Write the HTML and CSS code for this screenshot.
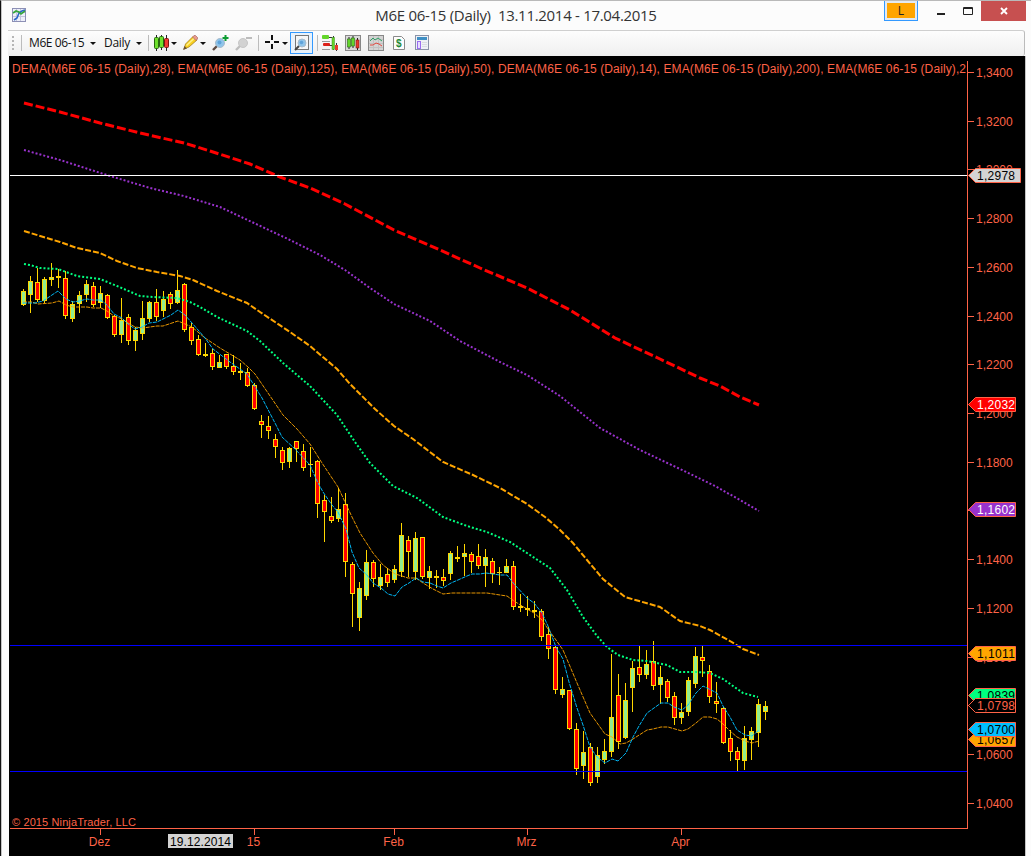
FILE: index.html
```html
<!DOCTYPE html>
<html lang="de">
<head>
    <meta charset="UTF-8">
    <title>M6E 06-15 (Daily)</title>
    <link rel="stylesheet" href="styles.css">
</head>
<body>
<div class="window">
    <div class="titlebar">
        <svg class="app-icon" width="14" height="14" viewBox="0 0 14 14">
            <rect x=".5" y=".5" width="13" height="13" fill="#eef0fa" stroke="#8d90b5"/>
            <path d="M4.5 1v12M8.5 1v12M1 4.5h12M1 8.5h12" stroke="#c3c5dc"/>
            <path d="M2 12l3-2 2-5 3-2 3-1" fill="none" stroke="#2a66c8" stroke-width="1.6"/>
            <path d="M1 5l3-2 3 1 2 2 4-3" fill="none" stroke="#35a839" stroke-width="1.6"/>
        </svg>
        <div class="title">M6E 06-15 (Daily)&nbsp; 13.11.2014 - 17.04.2015</div>
        <div class="controls">
            <button class="link-button"><span>L</span></button>
            <svg class="min" width="8" height="19"><rect y="12" width="8" height="2" fill="#222"/></svg>
            <svg class="max" width="10" height="19"><path d="M.5 6.500h9v7h-9zM0 7.500h10" fill="none" stroke="#222"/></svg>
            <button class="close">
                <svg width="8" height="8"><path d="M1 1l6 6M7 1L1 7" stroke="#fff" stroke-width="1.9"/></svg>
            </button>
        </div>
    </div>

    <div class="toolbar">
        <svg class="grip" width="3" height="16"><path d="M1 1v15" stroke="#b5b5b5" stroke-width="2" stroke-dasharray="2 2"/></svg>
        <i class="sep"></i>
        <span class="instrument">M6E 06-15</span>
        <i class="arrow"></i>
        <span class="interval">Daily</span>
        <i class="arrow"></i>
        <i class="sep sep-style"></i>
        <!-- chart style -->
        <svg class="style-icon" width="15" height="16">
            <path d="M2.500 0v16M7.500 0v15M12.500 0v16" stroke="#222"/>
            <rect x=".5" y="2.500" width="4" height="11" rx="1" fill="#6ee02c" stroke="#27680f"/>
            <rect x="5.500" y="1.500" width="4" height="11" rx="1" fill="#6ee02c" stroke="#27680f"/>
            <rect x="10.500" y="3.500" width="4" height="9" rx="1" fill="#ef3b32" stroke="#7d1511"/>
        </svg>
        <i class="arrow near"></i>
        <!-- drawing tools -->
        <svg class="pencil" width="15" height="15">
            <path d="M1 14l1.500-5L10 1.500 14 5 6 12z" fill="#f8cf21" stroke="#9a7410" stroke-width=".7"/>
            <path d="M3.500 10.500l8-7.500" stroke="#fff18a" stroke-width="1.500"/>
            <path d="M9.500 2l1.500-1.500h1.500l2 2v1.500L13 5.500z" fill="#e79a90" stroke="#a05c50" stroke-width=".6"/>
            <path d="M0 15l1.500-4 2.500 2.500z" fill="#6b5330"/>
        </svg>
        <i class="arrow near"></i>
        <svg class="zoom-in" width="17" height="16">
            <path d="M1 15l5-5" stroke="#5c4a42" stroke-width="2.400"/>
            <circle cx="8" cy="8" r="4.500" fill="#8fc4ea" stroke="#a9bccb"/>
            <circle cx="7.500" cy="7.500" r="2" fill="#5fa3da"/>
            <path d="M13.500 0v6M10.500 3h6" stroke="#0d9c32" stroke-width="2"/>
        </svg>
        <svg class="zoom-out" width="17" height="16">
            <path d="M1 15l5-5" stroke="#bdbdbd" stroke-width="2.400"/>
            <circle cx="8" cy="8" r="4.500" fill="#d2d2d2" stroke="#c6c6c6"/>
            <path d="M11 3h6" stroke="#bcbcbc" stroke-width="2"/>
        </svg>
        <i class="sep"></i>
        <svg class="cross" width="15" height="15">
            <path d="M7 0v5M7 9v5M0 7h5M9 7h5" stroke="#111" stroke-width="2"/>
        </svg>
        <i class="arrow near"></i>
        <span class="active-tool">
            <svg width="16" height="16">
                <rect x="1.500" y=".5" width="13" height="14" fill="#f6f6f6" stroke="#777"/>
                <path d="M1 15l5-5" stroke="#444" stroke-width="2"/>
                <circle cx="8" cy="8" r="4" fill="#8fc4ea" stroke="#a9bccb"/>
                <circle cx="7.500" cy="7.500" r="1.800" fill="#5fa3da"/>
            </svg>
        </span>
        <i class="sep sep-trader"></i>
        <!-- chart trader -->
        <svg class="tool" width="16" height="16">
            <path d="M6 2.500h4M6 10.500h4M11.500 1v14M14.500 8v8" stroke="#333"/>
            <rect x="0" y="0" width="7" height="4" rx="1" fill="#63d52a"/>
            <rect x="1" y="8" width="7" height="3" rx="1" fill="#dc2119"/>
            <path d="M0 6.500h8M0 14.500h8" stroke="#999"/>
            <rect x="10" y="2.500" width="2.500" height="12" fill="#63d52a" stroke="#3f8d22" stroke-width=".5"/>
            <rect x="13" y="10" width="3" height="5" fill="#e8392e"/>
        </svg>
        <svg class="tool" width="16" height="16">
            <rect x=".5" y=".5" width="15" height="15" fill="#d9d9d9" stroke="#888"/>
            <path d="M4 2v12M8 1v12M12.500 3v12" stroke="#222"/>
            <rect x="2.500" y="4" width="3" height="8" fill="#63d52a" stroke="#2b6b12" stroke-width=".6"/>
            <rect x="6.500" y="3" width="3" height="8" fill="#63d52a" stroke="#2b6b12" stroke-width=".6"/>
            <rect x="11" y="5" width="3" height="8" fill="#e8392e" stroke="#7d1511" stroke-width=".6"/>
        </svg>
        <svg class="tool" width="16" height="16">
            <rect x=".5" y=".5" width="15" height="15" fill="#d3d3d3" stroke="#888"/>
            <path d="M1 4.500h14M1 8.500h14M1 12.500h14M5.500 1v14M10.500 1v14" stroke="#c1c1c1"/>
            <path d="M2 6l3-3 2 2 3-2 4 3" fill="none" stroke="#2fa065"/>
            <path d="M2 10l3 0 3-2 3 1 3 2" fill="none" stroke="#e2483f"/>
        </svg>
        <svg class="page" width="12" height="14">
            <path d="M.5.500h8l3 3v10h-11z" fill="#fdfdfd" stroke="#8a8a8a"/>
            <text x="3" y="11" class="dollar">$</text>
        </svg>
        <svg class="props" width="14" height="16">
            <rect x=".5" y=".5" width="13" height="14" fill="#eef1f6" stroke="#8b93a8"/>
            <rect x="2" y="2" width="10" height="3" fill="#3f8fc4"/>
            <rect x="2.500" y="6.500" width="3" height="7" fill="#e7dcff" stroke="#9b6df0"/>
            <path d="M7 7.500h5M7 9.500h5M7 11.500h5" stroke="#d9dce2"/>
        </svg>
    </div>

    <svg id="chart" width="1016" height="800" viewBox="9 56 1016 800">
        <text x="12" y="73" textLength="954" class="label">DEMA(M6E 06-15 (Daily),28), EMA(M6E 06-15 (Daily),125), EMA(M6E 06-15 (Daily),50), DEMA(M6E 06-15 (Daily),14), EMA(M6E 06-15 (Daily),200), EMA(M6E 06-15 (Daily),2</text>
        <text x="12" y="826" textLength="124" class="label copyright">© 2015 NinjaTrader, LLC</text>
        <g id="candles"></g>
        <g id="averages"></g>
        <g class="crisp">
            <rect x="10" y="175" width="957" height="1" fill="#fff"/>
            <rect x="10" y="645" width="957" height="1" class="level"/>
            <rect x="10" y="771" width="957" height="1" class="level"/>
            <rect x="967" y="61" width="1" height="768" class="axis"/>
            <rect x="10" y="828" width="958" height="1" class="axis"/>
        </g>
        <g id="prices"></g>
        <g id="dates"></g>
        <g id="tags"></g>
    </svg>
</div>
<script src="chart.js"></script>
</body>
</html>
```
FILE: styles.css
```css
body {
    margin: 0;
    background: #fcfcfc;
    overflow: hidden;
}
.window {
    box-sizing: border-box;
    width: 1031px;
    height: 856px;
    border-top: 1px solid #b9b9b9;
    border-left: 1px solid #111;
    box-shadow: inset 1px 0 #c4c4c4;
}
.titlebar {
    display: grid;
    grid-template-columns: 1fr auto 1fr;
    height: 29px;
}
.app-icon {
    margin: 7px 0 0 11px;
}
.title {
    font: 15px/29px "Open Sans", "Noto Sans", sans-serif;
    letter-spacing: -0.3px;
    color: #333;
    white-space: pre;
}
.controls {
    display: flex;
    justify-content: flex-end;
    align-items: flex-start;
    padding-right: 5px;
}
button {
    border: none;
    padding: 0;
}
.link-button {
    box-sizing: border-box;
    width: 34px;
    height: 20px;
    padding: 2px;
    border: 1px solid #3399ff;
    border-top: none;
    background: #e3eaf2;
}
.link-button span {
    display: block;
    height: 15px;
    background: #ffa500;
    font: 12px/15px "Open Sans", sans-serif;
    color: #222;
}
.min {
    margin-left: 19px;
}
.max {
    margin: 0 8px 0 18px;
}
.close {
    display: flex;
    align-items: center;
    justify-content: center;
    width: 45px;
    height: 20px;
    background: #c75050;
}
.toolbar {
    display: flex;
    align-items: center;
    box-sizing: border-box;
    width: 1017px;
    height: 26px;
    margin-left: 7px;
    padding: 0 0 2px 4px;
    border-top: 1px solid #cfcfcf;
    border-right: 1px solid #bbb;
    border-radius: 0 3px 3px 0;
    background: linear-gradient(#fdfdfd, #efefef);
    font: 12px "Open Sans", "Noto Sans", sans-serif;
    color: #111;
}
.sep {
    width: 1px;
    height: 16px;
    margin: 0 6px;
    background: #bcbcbc;
}
.sep-style {
    margin: 0 5px 0 -2px;
}
.sep-trader {
    margin: 0 4px;
}
.arrow {
    margin: 2px 8px 0 6px;
    border: 3px solid transparent;
    border-top-color: #111;
    border-bottom: none;
}
.arrow.near {
    margin: 1px 6px 0 2px;
}
.instrument {
    width: 55px;
    margin-left: 1px;
    letter-spacing: -0.4px;
    white-space: nowrap;
}
.interval {
    width: 26px;
    letter-spacing: -0.3px;
}
.zoom-in {
    margin-right: 6px;
}
.active-tool {
    box-sizing: border-box;
    display: flex;
    align-items: center;
    justify-content: center;
    width: 23px;
    height: 22px;
    margin-left: -4px;
    border: 1px solid #3399ff;
    background: #e9f2fb;
}
.tool {
    margin-right: 7px;
}
.page {
    margin: 0 10px 0 2px;
}
.dollar {
    font: bold 10px "Liberation Sans", sans-serif;
    fill: #1c8a35;
}
#chart {
    display: block;
    margin-left: 8px;
    background: #000;
    border-right: 1px solid #c4c4c4;
}
#chart text {
    font: 12px "Liberation Sans", Arial, sans-serif;
}
#chart .copyright {
    font-size: 11px;
}
.label, .axis {
    fill: #ff6347;
}
.level {
    fill: #0000ff;
}
.crisp, #candles {
    shape-rendering: crispEdges;
}
.candle {
    fill: #ffd700;
}
.up {
    fill: #90ee90;
}
.down {
    fill: #ff0000;
}
.line {
    fill: none;
}
```
FILE: chart.js
```js
var NS = 'http://www.w3.org/2000/svg';

function add(parent, tag, attrs, text) {
    var el = document.createElementNS(NS, tag);
    for (var key in attrs) {
        el.setAttribute(key, attrs[key]);
    }
    if (text) el.textContent = text;
    document.getElementById(parent).appendChild(el);
}

// high, body top, body bottom, low, type (g = up, r = down, d = doji)
var candles = `289,291,305,306,g 276,281,295,313,g 268,282,300,302,r 277,279,301,303,g 263,277,280,286,g
269,276,278,288,d 271,278,316,319,r 301,304,319,322,g 291,295,304,313,g 280,284,295,302,g
282,286,305,307,r 286,293,303,308,g 294,295,318,319,r 315,316,335,337,r 298,320,335,343,g
314,317,341,345,r 327,330,341,351,g 301,318,334,340,g 301,302,319,322,g 289,302,317,321,r
291,299,311,317,g 292,294,304,309,r 270,290,303,304,g 283,284,330,332,r 323,327,341,345,r
335,339,355,356,r 343,354,356,357,d 349,353,367,370,r 355,362,368,368,g 354,354,367,369,r
355,366,372,375,r 363,371,373,380,d 368,372,386,387,r 383,385,409,410,r 415,421,425,438,r
416,426,431,439,r 434,439,447,458,r 447,450,463,470,r 447,448,462,468,g 441,441,449,462,r
444,451,468,471,r 447,464,465,477,d 460,461,504,518,r 495,500,512,542,r 497,516,521,523,r
488,509,519,522,g 493,504,562,577,r 562,564,594,627,r 582,588,618,631,g 550,562,596,600,g
560,562,579,587,r 564,577,586,590,g 568,574,583,587,r 565,569,580,583,g 523,535,572,577,g
536,540,552,577,r 532,538,572,580,g 537,537,577,579,r 566,571,578,589,g 570,576,578,588,d
569,577,581,586,r 551,553,574,580,g 546,557,559,562,d 544,553,557,576,g 552,554,562,573,r
544,556,566,569,r 549,557,566,587,g 558,561,574,583,r 567,572,573,585,d 559,566,573,573,g
561,566,607,610,r 594,606,608,612,d 596,608,610,616,d 601,610,612,618,d 609,611,637,641,r
627,634,649,659,r 645,647,690,694,r 677,689,695,698,g 690,690,729,730,r 723,729,769,775,r
731,752,766,779,g 743,747,783,786,r 747,755,777,783,g 739,751,760,764,g 654,717,752,757,g
674,695,742,749,r 683,700,738,739,g 661,668,688,712,g 646,667,675,682,r 650,664,675,679,g
641,661,686,690,r 666,677,685,704,g 679,681,698,702,r 692,696,718,725,r 703,712,718,724,g
677,680,712,716,g 647,656,684,688,g 646,657,661,677,r 665,671,697,703,r 682,701,704,713,r
707,708,743,744,r 730,738,752,761,r 747,751,760,771,r 726,738,761,770,g 727,731,740,760,g
699,704,733,747,g 701,706,712,720,g`.split(/\s+/);

candles.forEach(function (row, i) {
    var c = row.split(',');
    var x = 23 + i * 7;
    add('candles', 'rect', { x: x, y: c[0], width: 1, height: c[3] - c[0], class: 'candle' });
    add('candles', 'rect', { x: x - 2, y: c[1], width: 5, height: c[2] - c[1], class: 'candle' });
    if (c[4] != 'd') {
        add('candles', 'rect', { x: x - 1, y: +c[1] + 1, width: 3, height: c[2] - c[1] - 2, class: c[4] == 'g' ? 'up' : 'down' });
    }
});

var averages = [
    // EMA 200
    { color: '#ff0000', width: 3, dash: '9 3', points: '24,103 60,112 100,123 140,133 184,143 210,151 250,164 280,177 310,188 345,204 394,230 440,250 480,268 527,288 570,310 615,338 660,359 700,378 720,386 740,397 759,405' },
    // EMA 125
    { color: '#9932cc', width: 2, dash: '2 2', points: '24,150 60,160 110,176 150,188 184,196 220,207 254,223 290,240 320,255 345,270 370,288 394,304 430,321 460,341 500,362 527,375 560,396 600,428 640,450 680,469 715,486 740,500 759,511' },
    // EMA 50
    { color: '#ffa500', width: 2, dash: '6 2', points: '24,231 50,239 60,242 77,248 100,253 117,261 137,268 157,272 180,276 193,280 217,291 247,303 260,312 290,332 310,346 337,369 350,384 375,409 394,426 413,439 443,462 473,475 500,488 527,504 545,517 560,530 573,543 587,560 603,579 625,597 660,607 680,621 700,626 710,630 730,641 743,649 759,655' },
    // DEMA 28
    { color: '#00ff7f', width: 2, dash: '2 2', points: '24,264 30,265 40,268 58,269 77,276 100,279 117,286 140,296 153,297 177,298 190,302 200,307 217,317 247,331 260,341 283,363 310,386 337,415 355,442 370,463 393,486 417,498 443,517 467,526 487,532 510,542 530,555 550,568 567,590 583,617 597,636 607,647 618,655 633,660 647,661 667,665 680,672 697,672 710,673 723,679 743,693 758,697' },
    // EMA 20
    { color: '#ffa500', width: 1, dash: '4 1', opacity: 0.9, points: '23,302 32,302 38,304 52,303 59,301 66,305 73,307 87,307 93,308 101,308 107,311 114,316 122,319 128,323 135,327 143,328 157,326 163,326 178,321 192,327 205,338 220,348 240,360 248,367 255,374 268,393 283,415 297,429 310,444 322,463 332,478 338,487 352,517 360,533 373,553 383,565 395,574 402,576 408,578 416,578 423,583 433,589 443,594 452,593 487,593 500,595 507,596 514,601 527,609 534,613 542,620 548,629 556,640 563,650 569,664 577,683 590,713 605,734 612,737 620,744 626,743 633,739 647,730 653,729 661,727 668,727 682,731 688,729 696,723 703,717 710,717 717,719 723,724 730,731 737,737 745,741 752,743 759,741' },
    // DEMA 14
    { color: '#00bfff', width: 1, dash: '4 1', opacity: 0.95, points: '23,303 35,303 43,301 52,295 58,291 66,299 73,302 79,301 87,299 93,300 101,300 107,305 114,314 122,318 128,324 135,329 142,327 149,323 157,322 163,319 171,315 178,310 185,315 192,323 205,338 213,349 230,362 247,374 252,382 262,398 275,423 282,437 295,449 310,465 317,481 323,492 332,505 338,512 346,529 352,552 359,568 367,575 373,583 381,588 388,594 395,596 402,587 409,583 416,578 423,582 430,583 437,586 443,588 451,583 458,580 467,576 472,574 480,574 486,573 500,575 507,575 514,584 527,598 534,603 542,613 548,626 556,647 563,659 569,682 577,708 583,725 590,747 597,757 605,763 612,759 618,761 626,753 633,737 639,726 647,713 661,703 668,703 674,707 682,710 688,705 696,693 703,686 709,689 717,693 723,706 730,717 737,730 745,735 752,736 759,730' }
];

averages.forEach(function (a) {
    add('averages', 'polyline', {
        points: a.points,
        stroke: a.color,
        'stroke-width': a.width,
        'stroke-dasharray': a.dash,
        opacity: a.opacity || 1,
        class: 'line'
    });
});

// price scale
for (var p = 0; p < 16; p++) {
    var y = Math.floor(72.4 + p * 48.73);
    add('prices', 'rect', { x: 968, y: y, width: 6, height: 1, class: 'axis' });
    add('prices', 'text', { x: 976, y: y + 5, class: 'label' }, '1,' + String(3400 - p * 200).padStart(4, '0'));
}

// time scale
[[100, 'Dez'], [254, '15'], [394, 'Feb'], [527, 'Mrz'], [681, 'Apr']].forEach(function (d) {
    add('dates', 'rect', { x: d[0], y: 829, width: 1, height: 6, class: 'axis' });
    add('dates', 'text', { x: d[0] - 0.5, y: 846, 'text-anchor': 'middle', class: 'label' }, d[1]);
});
add('dates', 'rect', { x: 168, y: 834, width: 65, height: 14, fill: '#d3d3d3' });
add('dates', 'text', { x: 170, y: 846, textLength: 61, fill: '#000' }, '19.12.2014');

// price markers: top, right edge, fill, text colour, value
[
    [168, 1020.5, '#d3d3d3', '#000', '1,2978'],
    [397, 1015.5, '#ff0000', '#fff', '1,2032'],
    [502, 1015.5, '#9932cc', '#fff', '1,1602'],
    [646, 1015.5, '#ffa500', '#000', '1,1011'],
    [688, 1015.5, '#00ff7f', '#000', '1,0839'],
    [698, 1015.5, '#000', '#ff6347', '1,0798'],
    [732, 1015.5, '#ffa500', '#000', '1,0657'],
    [722, 1015.5, '#00bfff', '#000', '1,0700']
].forEach(function (t) {
    var top = t[0] + 0.5;
    var points = [[968.5, top + 7], [975.5, top], [t[1], top], [t[1], top + 14], [975.5, top + 14]].join(' ');
    add('tags', 'polygon', { points: points, fill: t[2], stroke: '#ff6347' });
    add('tags', 'text', { x: 977, y: t[0] + 12, textLength: 38, fill: t[3] }, t[4]);
});
```
